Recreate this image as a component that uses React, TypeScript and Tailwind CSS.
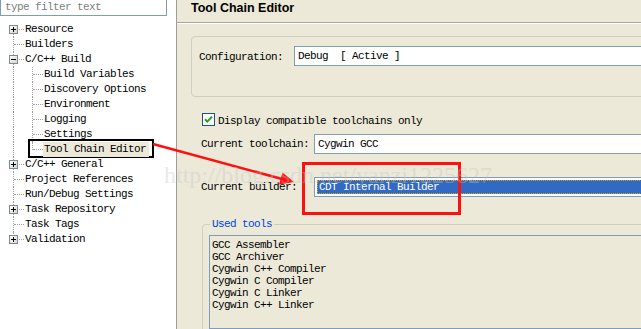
import React from "react";

const mono = { fontFamily: '"Liberation Mono", "DejaVu Sans Mono", monospace' };

type Node = { label: string; level: 0 | 1; box?: "plus" | "minus"; selected?: boolean };

const tree: Node[] = [
  { label: "Resource", level: 0, box: "plus" },
  { label: "Builders", level: 0 },
  { label: "C/C++ Build", level: 0, box: "minus" },
  { label: "Build Variables", level: 1 },
  { label: "Discovery Options", level: 1 },
  { label: "Environment", level: 1 },
  { label: "Logging", level: 1 },
  { label: "Settings", level: 1 },
  { label: "Tool Chain Editor", level: 1, selected: true },
  { label: "C/C++ General", level: 0, box: "plus" },
  { label: "Project References", level: 0 },
  { label: "Run/Debug Settings", level: 0 },
  { label: "Task Repository", level: 0, box: "plus" },
  { label: "Task Tags", level: 0 },
  { label: "Validation", level: 0, box: "plus" },
];

const tools = [
  "GCC Assembler",
  "GCC Archiver",
  "Cygwin C++ Compiler",
  "Cygwin C Compiler",
  "Cygwin C Linker",
  "Cygwin C++ Linker",
];

const ExpandBox = ({ kind }: { kind: "plus" | "minus" }) => (
  <span className="absolute left-[9px] top-[3px] z-10 flex h-[9px] w-[9px] items-center justify-center border border-[#7b8a99] bg-gradient-to-br from-white to-[#d8d4c8]">
    <span className="absolute h-px w-[5px] bg-black" />
    {kind === "plus" && <span className="absolute h-[5px] w-px bg-black" />}
  </span>
);

const TreeRow = ({ node, index }: { node: Node; index: number }) => {
  const first = index === 0;
  const last = index === tree.length - 1;
  const lastChild = node.label === "Tool Chain Editor";
  return (
    <div className="relative h-[15px]">
      <span
        className={`absolute left-[13px] w-0 border-l border-dotted border-[#a0a0a0] ${
          first ? "top-[7px] bottom-0" : last ? "top-0 h-[8px]" : "top-0 bottom-0"
        }`}
      />
      {node.level === 0 ? (
        <span className="absolute left-[14px] top-[7px] w-[10px] border-t border-dotted border-[#a0a0a0]" />
      ) : (
        <>
          <span
            className={`absolute left-[32px] w-0 border-l border-dotted border-[#a0a0a0] ${
              lastChild ? "top-0 h-[8px]" : "top-0 bottom-0"
            }`}
          />
          <span className="absolute left-[33px] top-[7px] w-[10px] border-t border-dotted border-[#a0a0a0]" />
        </>
      )}
      {node.box && <ExpandBox kind={node.box} />}
      {node.selected && (
        <span className="absolute left-[28px] top-[-3px] h-[19px] w-[126px] border-2 border-black" />
      )}
      <span
        className={`absolute top-0 flex h-[15px] items-center whitespace-nowrap text-[11px] tracking-[-0.6px] text-black ${
          node.level === 0 ? "left-[25px]" : "left-[43px] pl-px"
        } ${node.selected ? "bg-[#ECE9D8] pr-[3px]" : ""}`}
        style={mono}
      >
        {node.label}
      </span>
    </div>
  );
};

const Field = ({ children, className = "" }: { children?: React.ReactNode; className?: string }) => (
  <div className={`flex h-[20px] items-center border border-[#7F9DB9] bg-white ${className}`}>{children}</div>
);

export default function App() {
  return (
    <div className="relative flex h-[329px] w-[641px] overflow-hidden bg-white text-black" style={mono}>
      {/* left: filter + tree */}
      <div className="flex w-[176px] shrink-0 flex-col bg-white">
        <div className="flex h-[16px] w-[167px] items-center border border-t-0 border-[#7F9DB9] pl-[4px] text-[11px] tracking-[-0.6px] text-[#808080]">
          type filter text
        </div>
        <div className="mt-[6px]">
          {tree.map((n, i) => (
            <TreeRow key={n.label} node={n} index={i} />
          ))}
        </div>
      </div>

      {/* right: property page */}
      <div className="flex min-w-0 flex-1 flex-col border-l border-[#9d9d9d] bg-[#ECE9D8] text-[11px] leading-[14px] tracking-[-0.6px]">
        <div className="flex h-[23px] items-center border-b border-[#ACA899] pb-[6px] pl-[14px]">
          <span
            className="text-[12.5px] font-bold tracking-normal text-black"
            style={{ fontFamily: '"Liberation Sans", Arial, sans-serif' }}
          >
            Tool Chain Editor
          </span>
        </div>
        <div className="h-px bg-white" />

        <div className="ml-[14px] mr-[-20px] mt-[12px] flex h-[61px] items-start rounded-[4px] border border-[#D0D0BF] pl-[7px] pt-[9px]">
          <span className="mt-[4px] w-[95px]">Configuration:</span>
          <Field className="flex-1 pl-[3px]">Debug&nbsp;&nbsp;[ Active ]</Field>
        </div>

        <div className="ml-[25px] mt-[14px] flex items-center gap-[3px]">
          <span className="flex h-[13px] w-[13px] items-center justify-center border border-[#1C5180] bg-white">
            <svg width="9" height="9" viewBox="0 0 9 9">
              <path d="M1 4.2 L3.3 6.6 L8 1.6" fill="none" stroke="#21A121" strokeWidth="2" />
            </svg>
          </span>
          <span className="mt-[3px]">Display compatible toolchains only</span>
        </div>

        <div className="ml-[24px] mt-[6px] flex items-center">
          <span className="w-[113px]">Current toolchain:</span>
          <Field className="mr-[-20px] flex-1 pl-[3px]">Cygwin GCC</Field>
        </div>

        <div className="ml-[24px] mt-[23px] flex items-center">
          <span className="w-[113px]">Current builder:</span>
          <Field className="mr-[-20px] flex-1 px-[2px]">
            <div className="flex h-[14px] w-full items-center border border-dotted border-[#E0A000] bg-[#316AC5] pl-[1px] text-white">
              CDT Internal Builder
            </div>
          </Field>
        </div>

        <div className="relative ml-[25px] mr-[-20px] mt-[27px] flex-1 rounded-tl-[4px] border-l border-t border-[#D0D0BF] pl-[6px] pt-[10px]">
          <span className="absolute left-[7px] top-[-8px] bg-[#ECE9D8] px-[2px] text-[#0046D5]">Used tools</span>
          <div className="h-full border border-[#7F9DB9] pl-[2px] pt-[3px] leading-[12px]">
            {tools.map((t) => (
              <div key={t} className="whitespace-nowrap">
                {t}
              </div>
            ))}
          </div>
        </div>
      </div>

      {/* annotations: red box, arrow, watermark */}
      <div className="pointer-events-none absolute left-[302px] top-[162px] h-[53px] w-[159px] border-[3px] border-[#FF1010]" />
      <svg className="pointer-events-none absolute left-0 top-0" width="641" height="329">
        <line x1="153" y1="144" x2="282" y2="179" stroke="#FF1010" strokeWidth="2.5" />
        <polygon points="294,182 279,184.5 282.5,172.5" fill="#FF1010" />
      </svg>
      <span
        className="pointer-events-none absolute left-[164px] top-[163px] whitespace-nowrap text-[24px] leading-[24px] text-[#c4c4c4] opacity-35"
        style={{ fontFamily: '"Liberation Serif", "Times New Roman", serif' }}
      >
        http://blog.csdn.net/yanzi1225627
      </span>
    </div>
  );
}
